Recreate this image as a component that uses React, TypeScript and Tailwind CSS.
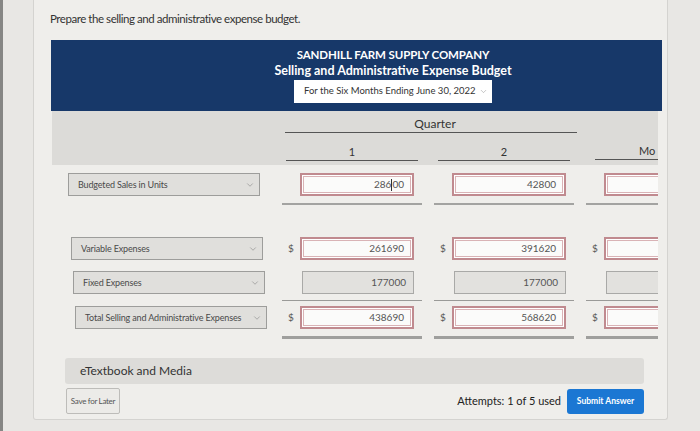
import { ChevronDown } from 'lucide-react';

// Budget worksheet screenshot — flat rendering of a photographed screen.

const COLS = [
  { v1: '28600', v2: '261690', v3: '177000', v4: '438690', caret: true },
  { v1: '42800', v2: '391620', v3: '177000', v4: '568620', caret: false },
  { v1: '', v2: '', v3: '', v4: '', caret: false },
];

function Select({ label, ml }: { label: string; ml: string }) {
  return (
    <div
      className={`${ml} w-[192px] h-[23px] bg-[#e0dfdc] border border-[#9d9d9b] flex items-center justify-between pl-[9px] pr-[4px] text-[9px] tracking-[-0.15px] whitespace-nowrap text-[#4a4a4a]`}
    >
      <span>{label}</span>
      <ChevronDown size={10} strokeWidth={1.5} className="text-[#888] shrink-0" />
    </div>
  );
}

function Box({ value, caret, gray }: { value: string; caret?: boolean; gray?: boolean }) {
  if (gray) {
    return (
      <div className="w-[112px] h-[23px] bg-[#e2e1de] border border-[#a9a9a7] flex items-center justify-end pr-[7px] text-[10px] text-[#555]">
        {value}
      </div>
    );
  }
  return (
    <div className="w-[114px] h-[23px] bg-[#fbfbfa] border-2 border-[#c08a8f] shadow-[inset_0_0_0_1px_#ffffff,inset_0_0_0_2px_#d9b3b6] flex items-center justify-end pr-[8px] text-[10px] text-[#555]">
      {caret ? (
        <>
          {value.slice(0, 3)}
          <span className="inline-block w-px h-[12px] bg-[#333]" />
          {value.slice(3)}
        </>
      ) : (
        value
      )}
    </div>
  );
}

function Dollar({ show }: { show: boolean }) {
  return (
    <span className="w-[18px] pl-[6px] text-[10px] text-[#555] shrink-0">{show ? '$' : ''}</span>
  );
}

export default function App() {
  return (
    <div className="w-[700px] h-[431px] bg-[#e8e7e4] flex overflow-hidden font-['Lato',sans-serif]">
      <div className="w-[3px] h-full bg-[#868684] shrink-0" />
      <div className="ml-[30px] w-[635px] h-[420px] shrink-0 bg-[#efeeeb] border-l border-r border-b border-[#d4d3d0] rounded-b-[3px] pl-[16px] pt-[11px] flex flex-col">
        <p className="text-[11.5px] leading-[16px] text-[#333] tracking-[-0.45px]">
          Prepare the selling and administrative expense budget.
        </p>

        {/* Blue header */}
        <div className="mt-[13px] ml-px w-[611px] h-[71px] bg-[#173869] pl-[73px] pt-[7px] flex flex-col items-center text-white">
          <div className="text-[11.5px] leading-[16px] font-bold tracking-[-0.1px]">SANDHILL FARM SUPPLY COMPANY</div>
          <div className="text-[12.5px] leading-[16px] font-bold">Selling and Administrative Expense Budget</div>
          <div className="mt-px w-[198px] h-[23px] bg-white flex items-center justify-between pl-[10px] pr-[4px] text-[9.5px] text-[#333]">
            <span>For the Six Months Ending June 30, 2022</span>
            <ChevronDown size={9} strokeWidth={1.5} className="text-[#999]" />
          </div>
        </div>

        {/* Table */}
        <div className="ml-[2px] w-[606px] overflow-hidden">
          {/* Column header band */}
          <div className="h-[54px] bg-[#dcdbd8] flex">
            <div className="w-[230px] shrink-0" />
            <div className="flex flex-col shrink-0">
              <div className="w-[292px] pt-[5px] mx-[3px] text-center text-[12px] leading-[16px] text-[#333] border-b border-[#555] pl-[8px]">
                Quarter
              </div>
              <div className="mt-[11px] flex gap-[12px]">
                <div className="w-[140px] px-[4px]">
                  <div className="text-center text-[11px] leading-[16px] text-[#333] border-b border-[#555]">1</div>
                </div>
                <div className="w-[140px] px-[4px]">
                  <div className="text-center text-[11px] leading-[16px] text-[#333] border-b border-[#555]">2</div>
                </div>
              </div>
            </div>
            <div className="ml-[9px] w-[70px] shrink-0 pt-[32px] pl-[6px]">
              <div className="pl-[44px] text-[11px] leading-[16px] text-[#333] border-b border-[#555] whitespace-nowrap">Mo</div>
            </div>
          </div>

          {/* Row 1 */}
          <div className="mt-[8px] flex">
            <div className="w-[230px] shrink-0">
              <Select label="Budgeted Sales in Units" ml="ml-[16px]" />
            </div>
            <div className="flex gap-[12px]">
              {COLS.map((c, i) => (
                <div key={i} className="w-[140px] shrink-0 pb-[7px] border-b-2 border-[#a3a3a1] flex">
                  <Dollar show={false} />
                  <Box value={c.v1} caret={c.caret} />
                </div>
              ))}
            </div>
          </div>

          {/* Row 2 */}
          <div className="mt-[32px] flex items-center">
            <div className="w-[230px] shrink-0">
              <Select label="Variable Expenses" ml="ml-[19px]" />
            </div>
            <div className="flex gap-[12px]">
              {COLS.map((c, i) => (
                <div key={i} className="w-[140px] shrink-0 flex items-center">
                  <Dollar show />
                  <Box value={c.v2} />
                </div>
              ))}
            </div>
          </div>

          {/* Row 3 */}
          <div className="mt-[11px] flex">
            <div className="w-[230px] shrink-0">
              <Select label="Fixed Expenses" ml="ml-[21px]" />
            </div>
            <div className="flex gap-[12px]">
              {COLS.map((c, i) => (
                <div key={i} className="w-[140px] shrink-0 pb-[6px] border-b border-[#9a9a98] flex">
                  <span className="w-[20px] shrink-0" />
                  <Box value={c.v3} gray />
                </div>
              ))}
            </div>
          </div>

          {/* Row 4 */}
          <div className="mt-[5px] flex">
            <div className="w-[230px] shrink-0">
              <Select label="Total Selling and Administrative Expenses" ml="ml-[23px]" />
            </div>
            <div className="flex gap-[12px]">
              {COLS.map((c, i) => (
                <div key={i} className="w-[140px] shrink-0 pb-[7px] border-b-[3px] border-[#9f9f9d] flex items-center">
                  <Dollar show />
                  <Box value={c.v4} />
                </div>
              ))}
            </div>
          </div>
        </div>

        {/* eTextbook */}
        <div className="mt-[19px] ml-[15px] w-[579px] h-[26px] rounded-[3px] bg-[#dddcd9] flex items-center pl-[15px] text-[12px] text-[#333]">
          eTextbook and Media
        </div>

        {/* Footer */}
        <div className="mt-[4px] ml-[16px] w-[578px] h-[26px] flex items-center">
          <div className="w-[54px] h-[26px] border border-[#bdbcb9] rounded-[2px] bg-[#ecebe8] flex items-center justify-center text-[8px] tracking-[-0.3px] whitespace-nowrap text-[#555]">
            Save for Later
          </div>
          <div className="ml-auto text-[11px] text-[#222]">Attempts: 1 of 5 used</div>
          <div className="ml-[6px] w-[77px] h-[25px] rounded-[3px] bg-[#1b77d3] flex items-center justify-center text-[8.5px] font-bold text-white">
            Submit Answer
          </div>
        </div>
      </div>
    </div>
  );
}
